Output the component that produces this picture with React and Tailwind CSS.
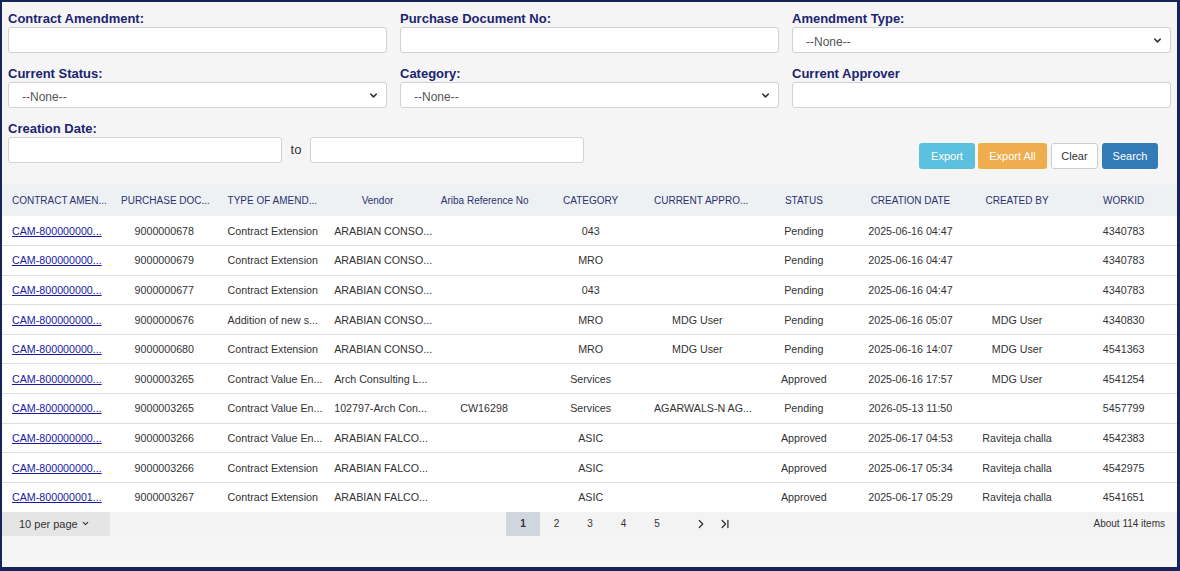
import { ChevronDown, ChevronRight, ChevronLast } from "lucide-react";

const font = { fontFamily: '"Liberation Sans", Arial, sans-serif' };

const rows = [
    ["CAM-800000000...", "9000000678", "Contract Extension", "ARABIAN CONSO...", "", "043", "", "Pending", "2025-06-16 04:47", "", "4340783"],
    ["CAM-800000000...", "9000000679", "Contract Extension", "ARABIAN CONSO...", "", "MRO", "", "Pending", "2025-06-16 04:47", "", "4340783"],
    ["CAM-800000000...", "9000000677", "Contract Extension", "ARABIAN CONSO...", "", "043", "", "Pending", "2025-06-16 04:47", "", "4340783"],
    ["CAM-800000000...", "9000000676", "Addition of new s...", "ARABIAN CONSO...", "", "MRO", "MDG User", "Pending", "2025-06-16 05:07", "MDG User", "4340830"],
    ["CAM-800000000...", "9000000680", "Contract Extension", "ARABIAN CONSO...", "", "MRO", "MDG User", "Pending", "2025-06-16 14:07", "MDG User", "4541363"],
    ["CAM-800000000...", "9000003265", "Contract Value En...", "Arch Consulting L...", "", "Services", "", "Approved", "2025-06-16 17:57", "MDG User", "4541254"],
    ["CAM-800000000...", "9000003265", "Contract Value En...", "102797-Arch Con...", "CW16298", "Services", "AGARWALS-N AG...", "Pending", "2026-05-13 11:50", "", "5457799"],
    ["CAM-800000000...", "9000003266", "Contract Value En...", "ARABIAN FALCO...", "", "ASIC", "", "Approved", "2025-06-17 04:53", "Raviteja challa", "4542383"],
    ["CAM-800000000...", "9000003266", "Contract Extension", "ARABIAN FALCO...", "", "ASIC", "", "Approved", "2025-06-17 05:34", "Raviteja challa", "4542975"],
    ["CAM-800000001...", "9000003267", "Contract Extension", "ARABIAN FALCO...", "", "ASIC", "", "Approved", "2025-06-17 05:29", "Raviteja challa", "4541651"],
];

const headers = ["CONTRACT AMEN...", "PURCHASE DOC...", "TYPE OF AMEND...", "Vendor", "Ariba Reference No", "CATEGORY", "CURRENT APPRO...", "STATUS", "CREATION DATE", "CREATED BY", "WORKID"];

function Label({ children }) {
    return <div className="h-[16px] text-[13px] font-bold leading-[16px] text-[#202470]">{children}</div>;
}

function TextInput({ className = "w-full" }) {
    return <input type="text" className={`${className} h-[26px] rounded-[3px] border border-[#cfd3d8] bg-white px-2 text-[12px] outline-none`} />;
}

function Select() {
    return (
        <div className="relative h-[26px] w-full rounded-[3px] border border-[#cfd3d8] bg-white">
            <span className="absolute left-[13px] top-[5px] text-[12px] text-[#555]">--None--</span>
            <ChevronDown className="absolute right-[7px] top-[7px] text-[#333]" size={11} strokeWidth={3.2} />
        </div>
    );
}

export default function App() {
    return (
        <div style={font} className="flex h-[571px] w-full flex-col border-l-[2px] border-t-[2px] border-r-[3px] border-b-[4px] border-[#16245a] bg-[#f5f5f6]">
            <div className="px-[6px] pt-[9px]">
                <div className="grid grid-cols-3 gap-x-[13px] gap-y-[13px]">
                    <div><Label>Contract Amendment:</Label><TextInput /></div>
                    <div><Label>Purchase Document No:</Label><TextInput /></div>
                    <div><Label>Amendment Type:</Label><Select /></div>
                    <div><Label>Current Status:</Label><Select /></div>
                    <div><Label>Category:</Label><Select /></div>
                    <div><Label>Current Approver</Label><TextInput /></div>
                </div>
                <div className="mt-[13px] flex items-end">
                    <div className="pb-[6px]">
                        <Label>Creation Date:</Label>
                        <div className="flex items-center">
                            <TextInput className="w-[274px]" />
                            <span className="w-[28px] text-center text-[13px] text-[#333]">to</span>
                            <TextInput className="w-[274px]" />
                        </div>
                    </div>
                    <div className="ml-auto mr-[13px] flex gap-[3px] text-[11px]">
                        <button className="h-[26px] w-[56px] rounded-[3px] bg-[#5bc0de] text-white">Export</button>
                        <button className="h-[26px] w-[69px] rounded-[3px] bg-[#f0ad4e] text-white">Export All</button>
                        <button className="ml-[1px] h-[26px] w-[47px] rounded-[3px] border border-[#ccc] bg-white text-[#333]">Clear</button>
                        <button className="ml-[1px] h-[26px] w-[56px] rounded-[3px] bg-[#337ab7] text-white">Search</button>
                    </div>
                </div>
            </div>

            <table className="mt-[15px] w-full table-fixed border-collapse">
                <colgroup>
                    <col className="w-[109px]" />
                </colgroup>
                <thead>
                    <tr className="h-[32px] bg-[#eef1f3] text-[10px]">
                        {headers.map((h, i) => (
                            <th key={h} className={`whitespace-nowrap px-[10px] font-normal text-[#2b3270] ${i === 0 ? "text-left" : "text-center"}`}>{h}</th>
                        ))}
                    </tr>
                </thead>
                <tbody className="text-[10.7px]">
                    {rows.map((r, ri) => (
                        <tr key={ri} className="h-[29.6px] border-b border-[#dedede] bg-white last:border-b-0">
                            {r.map((c, ci) => (
                                <td key={ci} className={`whitespace-nowrap px-[10px] text-[#333] ${ci === 0 || ci === 3 ? "text-left" : "text-center"}`}>
                                    {ci === 0 ? <a href="#" className="text-[#1a1aa6] underline">{c}</a> : c}
                                </td>
                            ))}
                        </tr>
                    ))}
                </tbody>
            </table>

            <div className="flex h-[24px] items-center bg-[#f3f3f3] text-[10px] text-[#333]">
                <div className="flex h-full w-[108px] items-center gap-[3px] bg-[#e5e5e5] pl-[17px] text-[11px]">
                    10 per page <ChevronDown size={9} strokeWidth={3} />
                </div>
                <div className="ml-[396px] flex h-full items-center">
                    <span className="flex h-full w-[34px] items-center justify-center bg-[#cfd6dd] font-bold">1</span>
                    <span className="w-[33px] text-center">2</span>
                    <span className="w-[34px] text-center">3</span>
                    <span className="w-[33px] text-center">4</span>
                    <span className="w-[34px] text-center">5</span>
                    <ChevronRight className="ml-[20px]" size={14} strokeWidth={2.2} />
                    <ChevronLast className="ml-[10px]" size={14} strokeWidth={2.2} />
                </div>
                <div className="ml-auto pr-[12px]">About 114 items</div>
            </div>
        </div>
    );
}
